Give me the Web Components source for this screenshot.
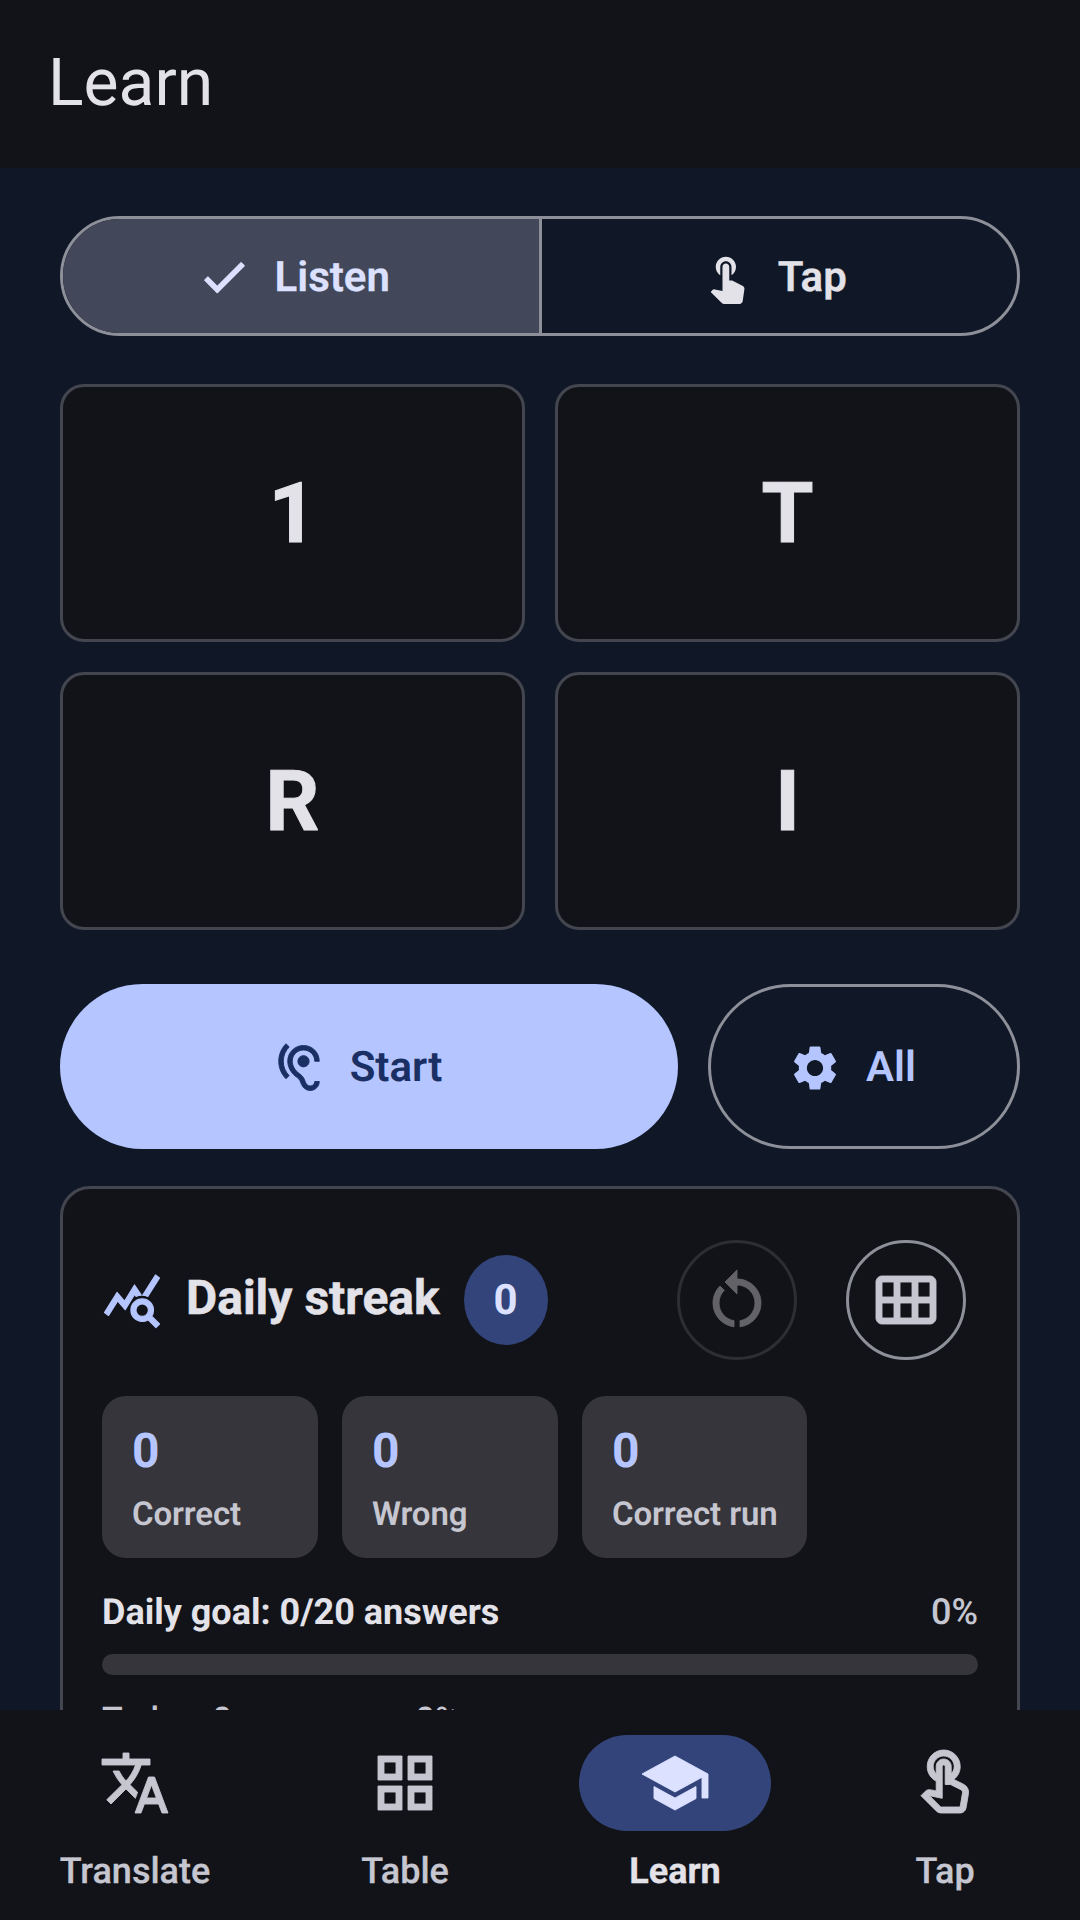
<!DOCTYPE html>
<html lang="en">
<head>
<meta charset="utf-8">
<title>Learn</title>
<style>
  html, body { margin: 0; padding: 0; background: #101828; }
  body { font-family: Roboto, "Noto Sans", sans-serif; text-rendering: geometricPrecision; }
</style>
</head>
<body>
<app-shell>
  <app-header slot="header">Learn</app-header>

  <mode-toggle>
    <toggle-option icon="check" selected>Listen</toggle-option>
    <toggle-option icon="touch">Tap</toggle-option>
  </mode-toggle>

  <key-grid>
    <key-card>1</key-card>
    <key-card>T</key-card>
    <key-card>R</key-card>
    <key-card>I</key-card>
  </key-grid>

  <action-row>
    <action-pill icon="hearing" kind="filled">Start</action-pill>
    <action-pill icon="settings" kind="outlined">All</action-pill>
  </action-row>

  <streak-card>
    <stat-tile slot="stats" value="0">Correct</stat-tile>
    <stat-tile slot="stats" value="0">Wrong</stat-tile>
    <stat-tile slot="stats" value="0">Correct run</stat-tile>
  </streak-card>

  <bottom-nav slot="nav">
    <nav-item icon="translate">Translate</nav-item>
    <nav-item icon="grid">Table</nav-item>
    <nav-item icon="school" active>Learn</nav-item>
    <nav-item icon="touchOutline">Tap</nav-item>
  </bottom-nav>
</app-shell>

<script>
// material icon paths, 24 unit box
const ICONS = {
  touch: "M9 11.24V7.5C9 6.12 10.12 5 11.5 5S14 6.12 14 7.5v3.74c1.21-.81 2-2.18 2-3.74C16 5.01 13.99 3 11.5 3S7 5.01 7 7.5c0 1.56.79 2.93 2 3.74zm9.84 4.63l-4.54-2.26c-.17-.07-.35-.11-.54-.11H13v-6c0-.83-.67-1.5-1.5-1.5S10 6.67 10 7.5v10.74l-3.43-.72c-.08-.01-.15-.03-.24-.03-.31 0-.59.13-.79.33l-.79.8 4.94 4.94c.27.27.65.44 1.06.44h6.79c.75 0 1.33-.55 1.44-1.28l.75-5.27c.01-.07.02-.14.02-.2 0-.62-.38-1.16-.91-1.38z",
  touchOutline: "M18.19 12.44l-3.24-1.62c1.29-1 2.12-2.56 2.12-4.32C17.07 3.47 14.6 1 11.57 1S6.07 3.47 6.07 6.5c0 2.13 1.22 3.98 3 4.89v3.26c-2.15-.46-2.02-.44-2.26-.44-.53 0-1.03.21-1.41.59L4 16.22l5.09 5.09c.43.44 1.03.69 1.65.69h6.3c.98 0 1.81-.7 1.97-1.67l.8-4.71c.22-1.3-.43-2.58-1.62-3.18zm-.35 2.85l-.8 4.71h-6.3c-.09 0-.17-.04-.24-.1l-3.68-3.68 4.25.89V6.5c0-.28.22-.5.5-.5s.5.22.5.5v6h1.76l3.46 1.73c.4.2.62.63.55 1.06zM8.07 6.5c0-1.93 1.57-3.5 3.5-3.5s3.5 1.57 3.5 3.5c0 .95-.38 1.81-1 2.44V6.5c0-1.38-1.12-2.5-2.5-2.5s-2.5 1.12-2.5 2.5v2.44c-.62-.63-1-1.49-1-2.44z",
  hearing: "M17 20c-.29 0-.56-.06-.76-.15-.71-.37-1.21-.88-1.71-2.38-.51-1.56-1.47-2.29-2.39-3-.79-.61-1.61-1.24-2.32-2.53C9.29 10.98 9 9.93 9 9c0-2.8 2.2-5 5-5s5 2.2 5 5h2c0-3.93-3.07-7-7-7S7 5.07 7 9c0 1.26.38 2.65 1.07 3.9.91 1.65 1.98 2.48 2.85 3.15.81.62 1.39 1.07 1.71 2.05.6 1.82 1.37 2.84 2.73 3.55.51.23 1.07.35 1.64.35 2.21 0 4-1.79 4-4h-2c0 1.1-.9 2-2 2zM7.64 2.64L6.22 1.22C4.23 3.21 3 5.96 3 9s1.23 5.79 3.22 7.78l1.41-1.41C6.01 13.74 5 11.49 5 9s1.01-4.74 2.64-6.36zM11.5 9c0 1.38 1.12 2.5 2.5 2.5s2.5-1.12 2.5-2.5-1.12-2.5-2.5-2.5-2.5 1.12-2.5 2.5z",
  settings: "M19.14 12.94c.04-.3.06-.61.06-.94 0-.32-.02-.64-.07-.94l2.03-1.58c.18-.14.23-.41.12-.61l-1.92-3.32c-.12-.22-.37-.29-.59-.22l-2.39.96c-.5-.38-1.03-.7-1.62-.94l-.36-2.54c-.04-.24-.24-.41-.48-.41h-3.84c-.24 0-.43.17-.47.41l-.36 2.54c-.59.24-1.13.57-1.62.94l-2.39-.96c-.22-.08-.47 0-.59.22L2.74 8.87c-.12.21-.08.47.12.61l2.03 1.58c-.05.3-.09.63-.09.94s.02.64.07.94l-2.03 1.58c-.18.14-.23.41-.12.61l1.92 3.32c.12.22.37.29.59.22l2.39-.96c.5.38 1.03.7 1.62.94l.36 2.54c.05.24.24.41.48.41h3.84c.24 0 .44-.17.47-.41l.36-2.54c.59-.24 1.13-.56 1.62-.94l2.39.96c.22.08.47 0 .59-.22l1.92-3.32c.12-.22.07-.47-.12-.61l-2.01-1.58zM12 15.6c-1.98 0-3.6-1.62-3.6-3.6s1.62-3.6 3.6-3.6 3.6 1.62 3.6 3.6-1.62 3.6-3.6 3.6z",
  stats: "M19.88 18.47c.44-.7.7-1.51.7-2.39 0-2.49-2.01-4.5-4.5-4.5s-4.5 2.01-4.5 4.5 2.01 4.5 4.49 4.5c.88 0 1.7-.26 2.39-.7L21.58 23 23 21.58l-3.12-3.11zm-3.8.11c-1.38 0-2.5-1.12-2.5-2.5s1.12-2.5 2.5-2.5 2.5 1.12 2.5 2.5-1.12 2.5-2.5 2.5zm-.36-8.5c-.74.02-1.45.18-2.1.45l-.55-.83-3.8 6.18-3.01-3.52-3.63 5.81L1 17l5-8 3 3.5L13 6l2.72 4.08zm2.59.5c-.64-.28-1.33-.45-2.05-.49L21.38 2 23 3.18l-4.69 7.4z",
  restart: "M12 5V2L8 6l4 4V7c3.31 0 6 2.69 6 6 0 2.97-2.17 5.43-5 5.91v2.02c3.95-.49 7-3.85 7-7.93 0-4.42-3.58-8-8-8zm-6 8c0-1.65.67-3.15 1.76-4.24L6.34 7.34C4.9 8.79 4 10.79 4 13c0 4.08 3.05 7.44 7 7.93v-2.02c-2.83-.48-5-2.94-5-5.91z",
  month: "M20 4H4c-1.1 0-2 .9-2 2v12c0 1.1.9 2 2 2h16c1.1 0 2-.9 2-2V6c0-1.1-.9-2-2-2zM8 11H4V6h4v5zm6 0h-4V6h4v5zm6 0h-4V6h4v5zM8 18H4v-5h4v5zm6 0h-4v-5h4v5zm6 0h-4v-5h4v5z",
  translate: "M12.87 15.07l-2.54-2.51.03-.03c1.74-1.94 2.98-4.17 3.71-6.53H17V4h-7V2H8v2H1v1.99h11.17C11.5 7.92 10.44 9.75 9 11.35 8.07 10.32 7.3 9.19 6.69 8h-2c.73 1.63 1.73 3.17 2.98 4.56l-5.09 5.02L4 19l5-5 3.11 3.11.76-2.04zM18.5 10h-2L12 22h2l1.12-3h4.75L21 22h2l-4.5-12zm-2.62 7l1.62-4.33L19.12 17h-3.24z",
  grid: "M3 3v8h8V3H3zm6 6H5V5h4v4zm-6 4v8h8v-8H3zm6 6H5v-4h4v4zm4-16v8h8V3h-8zm6 6h-4V5h4v4zm-6 4v8h8v-8h-8zm6 6h-4v-4h4v4z",
  school: "M5 13.18v4L12 21l7-3.82v-4L12 17l-7-3.82zM12 3L1 9l11 6 9-4.91V17h2V9L12 3z",
  check: "M9 16.17L4.83 12l-1.42 1.41L9 19 21 7l-1.41-1.41z"
};

class MIcon extends HTMLElement {
  connectedCallback() {
    const size = this.getAttribute("size") || 72;
    const d = ICONS[this.getAttribute("name")];
    const round = this.getAttribute("round") || 0;
    this.attachShadow({ mode: "open" });
    this.shadowRoot.innerHTML = `
      <style>
        :host { display: block; width: ${size}px; height: ${size}px; flex: none; }
        svg { display: block; width: 100%; height: 100%; fill: currentColor; overflow: visible; }
        path { stroke: currentColor; stroke-width: ${round}; stroke-linejoin: round; }
      </style>
      <svg viewBox="0 0 24 24"><path d="${d}"/></svg>
    `;
  }
}

class AppShell extends HTMLElement {
  connectedCallback() {
    this.attachShadow({ mode: "open" });
    this.shadowRoot.innerHTML = `
      <style>
        :host { display: flex; flex-direction: column; width: 1080px; height: 1920px; overflow: hidden; background: #101828; }
        main { flex: 1; min-height: 0; overflow: hidden; padding: 48px 60px 0; display: flex; flex-direction: column; }
      </style>
      <slot name="header"></slot>
      <main><slot></slot></main>
      <slot name="nav"></slot>
    `;
  }
}

class AppHeader extends HTMLElement {
  connectedCallback() {
    this.attachShadow({ mode: "open" });
    this.shadowRoot.innerHTML = `
      <style>
        :host {
          display: flex; align-items: center; flex: none;
          height: 168px; padding: 0 48px 1px; box-sizing: border-box;
          background: #121318; color: #e3e2e9;
          font-size: 66px; font-weight: 400;
        }
      </style>
      <slot></slot>
    `;
  }
}

class ModeToggle extends HTMLElement {
  connectedCallback() {
    this.attachShadow({ mode: "open" });
    this.shadowRoot.innerHTML = `
      <style>
        :host {
          display: grid; grid-template-columns: 478.5px 1fr; flex: none;
          height: 120px; box-sizing: border-box;
          border: 3px solid #8e9099; border-radius: 60px; overflow: hidden;
        }
      </style>
      <slot></slot>
    `;
  }
}

class ToggleOption extends HTMLElement {
  connectedCallback() {
    const icon = this.getAttribute("icon");
    this.attachShadow({ mode: "open" });
    this.shadowRoot.innerHTML = `
      <style>
        :host {
          display: flex; align-items: center; justify-content: center; gap: 24px;
          padding: 2px 12px 0 0; box-sizing: border-box;
          color: #e3e2e9; font-size: 42px; font-weight: 600;
          -webkit-text-stroke: 0.3px currentColor;
        }
        :host([selected]) { background: #424759; color: #dce1ff; border-right: 3px solid #8e9099; padding-right: 15px; }
      </style>
      <m-icon name="${icon}" size="54" round="${icon === "check" ? 0.5 : 0}"></m-icon>
      <slot></slot>
    `;
  }
}

class KeyGrid extends HTMLElement {
  connectedCallback() {
    this.attachShadow({ mode: "open" });
    this.shadowRoot.innerHTML = `
      <style>
        :host { display: grid; grid-template-columns: 1fr 1fr; gap: 30px; margin-top: 48px; flex: none; }
      </style>
      <slot></slot>
    `;
  }
}

class KeyCard extends HTMLElement {
  connectedCallback() {
    this.attachShadow({ mode: "open" });
    this.shadowRoot.innerHTML = `
      <style>
        :host {
          display: flex; align-items: center; justify-content: center;
          height: 258px; padding-top: 1px; box-sizing: border-box;
          background: #121318; color: #e3e2e9;
          border: 3px solid #44464f; border-radius: 24px;
          font-size: 84px; font-weight: 700;
          -webkit-text-stroke: 1px currentColor;
        }
      </style>
      <slot></slot>
    `;
  }
}

class ActionRow extends HTMLElement {
  connectedCallback() {
    this.attachShadow({ mode: "open" });
    this.shadowRoot.innerHTML = `
      <style>
        :host { display: grid; grid-template-columns: 618px 312px; gap: 30px; margin-top: 54px; flex: none; }
      </style>
      <slot></slot>
    `;
  }
}

class ActionPill extends HTMLElement {
  connectedCallback() {
    const icon = this.getAttribute("icon");
    this.attachShadow({ mode: "open" });
    this.shadowRoot.innerHTML = `
      <style>
        :host {
          display: flex; align-items: center; justify-content: center; gap: 24px;
          height: 165px; padding: 2px 24px 0 0; box-sizing: border-box; border-radius: 83px;
          font-size: 42px; font-weight: 600;
        }
        :host([kind="filled"]) { background: #b4c5ff; color: #1a2f63; }
        :host([kind="outlined"]) { border: 3px solid #8e9099; color: #b4c5ff; }
      </style>
      <m-icon name="${icon}" size="54" round="${icon === "hearing" ? 0.4 : 0}"></m-icon>
      <slot></slot>
    `;
  }
}

class IconButton extends HTMLElement {
  connectedCallback() {
    const icon = this.getAttribute("icon");
    this.attachShadow({ mode: "open" });
    this.shadowRoot.innerHTML = `
      <style>
        :host {
          display: flex; align-items: center; justify-content: center; flex: none;
          width: 120px; height: 120px; margin: 12px; box-sizing: border-box;
          border: 3px solid #8e9099; border-radius: 50%; color: #c5c6d0;
        }
        :host([disabled]) { border-color: #2d2e33; color: #626267; }
      </style>
      <m-icon name="${icon}" size="72" round="0.3"></m-icon>
    `;
  }
}

class StatTile extends HTMLElement {
  connectedCallback() {
    const value = this.getAttribute("value");
    this.attachShadow({ mode: "open" });
    this.shadowRoot.innerHTML = `
      <style>
        :host {
          display: flex; flex-direction: column;
          min-width: 216px; height: 162px; padding: 22px 29px 0 30px; box-sizing: border-box;
          background: #35353b; border-radius: 24px;
        }
        .value { color: #b4c5ff; font-size: 48px; font-weight: 700; line-height: 66px; }
        .label { margin-top: 7px; color: #c5c6d0; font-size: 33px; font-weight: 600; line-height: 48px; letter-spacing: -0.1px; }
      </style>
      <div class="value">${value}</div>
      <div class="label"><slot></slot></div>
    `;
  }
}

class StreakCard extends HTMLElement {
  connectedCallback() {
    this.attachShadow({ mode: "open" });
    this.shadowRoot.innerHTML = `
      <style>
        :host {
          display: block; flex: none; margin-top: 37px; padding: 39px;
          background: #121318; color: #e3e2e9;
          border: 3px solid #44464f; border-radius: 30px;
        }
        .head { display: flex; align-items: center; }
        .glyph { color: #b4c5ff; margin-right: 24px; }
        .title { padding-bottom: 5px; font-size: 48px; font-weight: 700; -webkit-text-stroke: 0.5px currentColor; }
        .badge {
          display: flex; align-items: center; justify-content: center;
          width: 84px; height: 90px; margin-left: 24px; border-radius: 50%;
          background: #324479; color: #dce1ff; font-size: 42px; font-weight: 700;
        }
        .spacer { flex: 1; }
        .tools { display: flex; gap: 25px; }
        .stats { display: flex; gap: 24px; margin-top: 24px; }
        .goal { display: flex; justify-content: space-between; margin-top: 30px; font-size: 36px; line-height: 48px; font-weight: 700; }
        .goal .pct { font-weight: 500; color: #c5c6d0; }
        .bar { height: 21px; margin-top: 18px; border-radius: 11px; background: #35353b; }
        .today { margin-top: 21px; font-size: 34px; line-height: 48px; font-weight: 500; color: #c5c6d0; word-spacing: 1.5px; }
      </style>
      <div class="head">
        <m-icon class="glyph" name="stats" size="60" round="0.5"></m-icon>
        <span class="title">Daily streak</span>
        <span class="badge">0</span>
        <span class="spacer"></span>
        <div class="tools">
          <icon-button icon="restart" disabled></icon-button>
          <icon-button icon="month"></icon-button>
        </div>
      </div>
      <div class="stats"><slot name="stats"></slot></div>
      <div class="goal"><span>Daily goal: 0/20 answers</span><span class="pct">0%</span></div>
      <div class="bar"></div>
      <div class="today">Today: 0 answers — 0%</div>
    `;
  }
}

class BottomNav extends HTMLElement {
  connectedCallback() {
    this.attachShadow({ mode: "open" });
    this.shadowRoot.innerHTML = `
      <style>
        :host {
          display: grid; grid-template-columns: repeat(4, 1fr); flex: none;
          height: 210px; background: #121318;
        }
      </style>
      <slot></slot>
    `;
  }
}

class NavItem extends HTMLElement {
  connectedCallback() {
    const icon = this.getAttribute("icon");
    this.attachShadow({ mode: "open" });
    this.shadowRoot.innerHTML = `
      <style>
        :host {
          display: flex; flex-direction: column; align-items: center;
          padding-top: 25px; color: #c5c6d0;
          font-size: 36px; font-weight: 500;
          -webkit-text-stroke: 0.3px currentColor;
        }
        .pill {
          display: flex; align-items: center; justify-content: center;
          width: 192px; height: 96px; border-radius: 48px;
        }
        .label { margin-top: 13px; line-height: 54px; }
        :host([active]) { color: #e3e2e9; font-weight: 700; }
        :host([active]) .pill { background: #324479; color: #dce1ff; }
      </style>
      <div class="pill"><m-icon name="${icon}" size="72" round="0.3"></m-icon></div>
      <div class="label"><slot></slot></div>
    `;
  }
}

customElements.define("m-icon", MIcon);
customElements.define("app-shell", AppShell);
customElements.define("app-header", AppHeader);
customElements.define("mode-toggle", ModeToggle);
customElements.define("toggle-option", ToggleOption);
customElements.define("key-grid", KeyGrid);
customElements.define("key-card", KeyCard);
customElements.define("action-row", ActionRow);
customElements.define("action-pill", ActionPill);
customElements.define("icon-button", IconButton);
customElements.define("stat-tile", StatTile);
customElements.define("streak-card", StreakCard);
customElements.define("bottom-nav", BottomNav);
customElements.define("nav-item", NavItem);
</script>
</body>
</html>
